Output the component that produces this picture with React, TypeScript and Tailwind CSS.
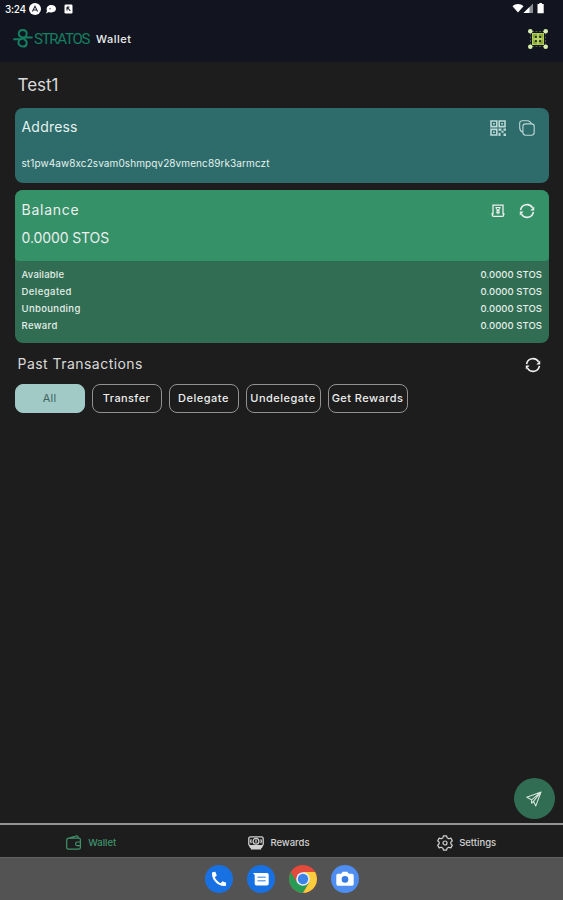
import type { ReactNode } from "react";
import clsx from "clsx";

const balances = [
  { label: "Available", value: "0.0000 STOS", spacing: "tracking-[0.2px]" },
  { label: "Delegated", value: "0.0000 STOS", spacing: "tracking-[0.45px]" },
  { label: "Unbounding", value: "0.0000 STOS", spacing: "tracking-[0.35px]" },
  { label: "Reward", value: "0.0000 STOS", spacing: "tracking-[0.35px]" },
];

const filters = [
  { label: "All", width: "w-[70px]", spacing: "tracking-[0.2px]" },
  { label: "Transfer", width: "w-[70px]", spacing: "tracking-[0.4px]" },
  { label: "Delegate", width: "w-[70px]", spacing: "tracking-[0.5px]" },
  { label: "Undelegate", width: "w-[75px]", spacing: "tracking-[0.5px]" },
  { label: "Get Rewards", width: "w-[80px]", spacing: "tracking-[0.45px]" },
];

const RefreshIcon = ({ className }: { className?: string }) => (
  <svg viewBox="0 0 16 16" className={clsx("w-4 h-4", className)} fill="none" stroke="currentColor" strokeWidth="1.6">
    <path d="M1.6 7.2A6.5 6.5 0 0 1 13.6 4.8M14.4 8.8A6.5 6.5 0 0 1 2.4 11.2" />
    <path d="M15.2 3.6v3.8h-3.9zM.8 12.4V8.6h3.9z" fill="currentColor" stroke="none" />
  </svg>
);

const QrIcon = () => (
  <svg viewBox="0 0 16 16" className="w-4 h-4" fill="none" stroke="currentColor" strokeWidth="1.6">
    <path d="M1 1h5.8v5.6H1zM9.2 1H15v5.6H9.2zM1 9.4h5.8V15H1z" />
    <path
      d="M3 3h1.8v1.6H3zM11.2 3H13v1.6h-1.8zM3 11.4h1.8V13H3zM8.5 8.5h3v2.2h-3zM11.5 10.7h2v2h-2zM13.5 8.5H16v2.2h-2.5zM8.5 12.7h2V16h-2zM13.5 13.5H16V16h-2.5z"
      fill="currentColor"
      stroke="none"
    />
  </svg>
);

const CopyIcon = () => (
  <svg viewBox="0 0 16 16" className="w-4 h-4" fill="none" stroke="currentColor" strokeWidth="1.1">
    <rect x="3.9" y="3.9" width="11.3" height="11.3" rx="2.6" />
    <path d="M3.7 12.3C1.7 11.4.7 10 .7 7.5V3.2A2.5 2.5 0 0 1 3.2.7h5.2c2 0 3.3 1 4 3.2" />
  </svg>
);

const ClaimIcon = () => (
  <svg viewBox="0 0 14 14" className="w-3.5 h-3.5" fill="none" stroke="currentColor" strokeWidth="1.3">
    <path d="M2 10.6V1.2h10v9.4M1.2 9v1.5c0 1.3.6 1.9 1.7 1.9h8.2c1.1 0 1.7-.6 1.7-1.9V9" />
    <path d="M4.5 3.5h5M4.9 4 7 6.6 9.1 4M7 6.5v3.8M5 7h4M5 8.7h4" strokeWidth="1.1" />
  </svg>
);

const SendIcon = () => (
  <svg viewBox="0 0 16 16" className="w-4 h-4" fill="none" stroke="currentColor" strokeWidth="1.1" strokeLinejoin="round">
    <path d="M15 1 .8 6.3l4.8 2.5L15 1 7.5 10.4l2.3 4.5zM5.6 8.8v3.4l1.9-1.8" />
  </svg>
);

const WalletIcon = () => (
  <svg viewBox="0 0 16 15" className="w-4 h-[15px]" fill="none" stroke="currentColor" strokeWidth="1.2">
    <path d="M2.7 3.2h10.1a1.6 1.6 0 0 1 1.6 1.6v7.7a1.6 1.6 0 0 1-1.6 1.6H2.3a1.6 1.6 0 0 1-1.6-1.6V5.2a2 2 0 0 1 2-2ZM3 3.1 10 1c1.3-.3 2.3.3 2.4 2.1M14.4 7h-3a1.8 1.8 0 0 0 0 3.6h3" />
  </svg>
);

const RewardsIcon = () => (
  <svg viewBox="0 0 16 14" className="w-4 h-3.5" fill="none" stroke="currentColor" strokeWidth="1.3">
    <rect x=".8" y=".8" width="14.4" height="9" rx="1.8" />
    <circle cx="8" cy="5.2" r="2.9" />
    <path d="M8 3.6v3.2M3.4 3.3c-.8 1-.8 2.6 0 3.7M12.6 3.3c.8 1 .8 2.6 0 3.7" />
    <path d="M1.2 9.9h13.6M1.8 11.3h12.4M2.8 12.8h10.4" strokeWidth="1.6" />
  </svg>
);

const SettingsIcon = () => (
  <svg viewBox="0 0 16 16" className="w-4 h-4" fill="none" stroke="currentColor" strokeWidth="1.2" strokeLinejoin="round">
    <path d="M6.4.8h3.2l.5 2 1.7 1 2-.7 1.5 2.8L13.8 7.2v1.6l1.5 1.3-1.5 2.8-2-.7-1.7 1-.5 2H6.4l-.5-2-1.7-1-2 .7-1.5-2.8 1.5-1.3V7.2L.7 5.9l1.5-2.8 2 .7 1.7-1z" />
    <circle cx="8" cy="8" r="2" />
  </svg>
);

const ScanIcon = () => (
  <svg viewBox="0 0 22 22" className="w-[22px] h-[22px]">
    <path d="M5 3.5h12M5 18.5h12M3.5 5v12M18.5 5v12" stroke="#4d594a" strokeDasharray="2 1.5" fill="none" />
    <rect x="5.5" y="5.5" width="11" height="11" fill="#8ba83b" stroke="#b3cf55" strokeWidth="1" />
    <path d="M11 6v10M6.5 11h9" stroke="#c5dc71" strokeWidth="1.4" />
    <path d="M8 8h1.8v1.8H8zM12.2 8H14v1.8h-1.8zM8 12.2h1.8V14H8zM12.2 12.2H14V14h-1.8z" fill="#1b2417" />
    <g fill="#d9efaf">
      <circle cx="3.3" cy="3.3" r="2.3" />
      <circle cx="18.7" cy="3.3" r="2.3" />
      <circle cx="3.3" cy="18.7" r="2.3" />
      <circle cx="18.7" cy="18.7" r="2.3" />
    </g>
  </svg>
);

const StatusBar = () => (
  <div className="flex h-[18px] items-center pl-[5px] pr-[18px] text-white">
    <span className="w-[21px] text-[10px] font-medium tracking-[-0.3px]">3:24</span>
    <svg viewBox="0 0 12 12" className="ml-[3px] w-3 h-3">
      <circle cx="6" cy="6" r="6" fill="#fff" />
      <path d="M3.4 8.5 6 3.3l2.6 5.2M4.4 7h3.2" stroke="#222936" strokeWidth="1.1" fill="none" />
    </svg>
    <svg viewBox="0 0 12 10" className="ml-1 w-3 h-2.5">
      <path d="M6.3 1C9 1 11 2.5 11 4.8S9 8.4 6.3 8.4c-1 0-1.7-.1-2.4-.5L1 9.5l1-2.8C.8 3.5 3 1 6.3 1Z" fill="#fff" />
      <circle cx="5" cy="4.8" r=".7" fill="#38404c" />
    </svg>
    <svg viewBox="0 0 9 10" className="ml-[7px] w-[9px] h-2.5">
      <rect x=".5" y=".5" width="8" height="9" rx="1.2" fill="#fff" />
      <path d="M3 3h2.5M3 3v3.5M3.4 3.2 6.3 7" stroke="#222936" strokeWidth="1.1" />
    </svg>
    <svg viewBox="0 0 34 12" className="ml-auto mb-0.5 h-3 w-[34px]" fill="#fff">
      <path d="M1.5 4.2c3-3 8-3 11 0L7 10.5z" />
      <path d="M22 1.5v9.5h-9.5z" fill="#8a8d93" />
      <path d="M18.5 5V11h-6z" />
      <path d="M26.5 2h1.8V1h2.6v1h1.8v9.3h-6.2z" />
    </svg>
  </div>
);

const Header = () => (
  <header className="h-[62px] bg-[#12151f]">
    <StatusBar />
    <div className="flex h-[42px] items-center pl-[13px] pr-[14px]">
      <svg viewBox="0 0 20 20" className="mb-0.5 h-5 w-5 shrink-0" fill="none" stroke="#147f60" strokeWidth="2">
        <path d="M.3 11.2h7.2C10 11.2 13.7 9 13.7 5.8c0-5-7.9-5-7.9 0 0 2 1.6 3.3 3.9 3.6h9.9" />
        <path d="M7 11c-4 5.7 1 7.6 3 7.6 4.7 0 5-6.2.6-7.5" />
      </svg>
      <span className="ml-px w-[61px] font-[Roboto] text-[15px] tracking-[-1.25px] text-[#147f60]">STRATOS</span>
      <span className="ml-px pt-px text-[11px] font-medium tracking-[0.5px]">Wallet</span>
      <div className="ml-auto">
        <ScanIcon />
      </div>
    </div>
  </header>
);

const AddressCard = () => (
  <section className="mt-[9px] h-[75px] rounded-lg bg-[#2d6c6a] px-[7px] text-[#e5f1ef]">
    <div className="flex h-[37px] items-center pr-[7px]">
      <h2 className="flex-1 pt-px text-sm tracking-[0.2px]">Address</h2>
      <div className="flex gap-[13px] pt-[3px] text-[#bcd8d7]">
        <QrIcon />
        <CopyIcon />
      </div>
    </div>
    <p className="mt-[10px] text-[10px] leading-4 tracking-[0.09px]">st1pw4aw8xc2svam0shmpqv28vmenc89rk3armczt</p>
  </section>
);

const BalanceCard = () => (
  <section className="mt-[7px] h-[153px] overflow-hidden rounded-lg bg-[#306d52]">
    <div className="h-[71px] rounded-b bg-[#349168] px-[7px]">
      <div className="flex h-[38px] items-center pr-[7px]">
        <h2 className="flex-1 pt-0.5 text-sm tracking-[0.75px]">Balance</h2>
        <div className="flex items-center gap-3.5 pt-1">
          <ClaimIcon />
          <RefreshIcon />
        </div>
      </div>
      <p className="text-sm leading-5 tracking-[-0.1px]">0.0000 STOS</p>
    </div>
    <div className="pt-[6px] text-[9.5px] font-medium text-[#e5eee9]">
      {balances.map(({ label, value, spacing }) => (
        <div key={label} className="flex h-[17px] items-center justify-between px-[7px]">
          <span className={spacing}>{label}</span>
          <span className="tracking-[0.05px]">{value}</span>
        </div>
      ))}
    </div>
  </section>
);

const NavItem = ({ label, icon, active }: { label: string; icon: ReactNode; active?: boolean }) => (
  <div
    className={clsx(
      "flex flex-1 items-center justify-center gap-[6px] pr-[5px] pt-[3px]",
      active ? "text-[#40946d]" : "text-[#d1d1d1]",
    )}
  >
    {icon}
    <span className="pt-0.5 text-[9.5px] font-medium">{label}</span>
  </div>
);

const Dock = () => (
  <div className="flex h-[43px] items-center justify-center gap-3.5 border-t border-[#626262] bg-[#535353]">
    <svg viewBox="0 0 28 28" className="w-7 h-7">
      <circle cx="14" cy="14" r="14" fill="#1871e3" />
      <path d="m7.2 7.2 3.1-.4 1.5 3.8-2 1.6c1.2 2.7 3.2 4.7 6 6l1.6-2 3.8 1.5-.4 3.2C14 22.6 5.5 14 7.2 7.2Z" fill="#fff" />
    </svg>
    <svg viewBox="0 0 28 28" className="w-7 h-7">
      <circle cx="14" cy="14" r="14" fill="#1871e3" />
      <path d="M6 8h14a1.7 1.7 0 0 1 1.7 1.7v9a1.7 1.7 0 0 1-1.7 1.7H9.4a1.7 1.7 0 0 1-1.7-1.7V10z" fill="#fff" />
      <path d="M10.5 12.2h8.2M10.5 15.8h8.2" stroke="#72a6ec" strokeWidth="1.6" />
    </svg>
    <svg viewBox="0 0 28 28" className="w-7 h-7">
      <circle cx="14" cy="14" r="14" fill="#e34a3b" />
      <path d="M1.9 7A14 14 0 0 0 14 28l6.1-10.5L14 14l-6.1 3.5z" fill="#279b53" />
      <path d="M14 28A14 14 0 0 0 26.1 7H14l6.1 10.5z" fill="#fbcc3b" />
      <circle cx="14" cy="14" r="6.8" fill="#e9eff8" />
      <circle cx="14" cy="14" r="5.2" fill="#3c83e8" />
    </svg>
    <svg viewBox="0 0 28 28" className="w-7 h-7">
      <circle cx="14" cy="14" r="14" fill="#4f8ef0" />
      <path d="M7 8.7h3.2l1.6-2h4.4l1.6 2H21a1.7 1.7 0 0 1 1.7 1.7v8.7a1.7 1.7 0 0 1-1.7 1.7H7a1.7 1.7 0 0 1-1.7-1.7v-8.7A1.7 1.7 0 0 1 7 8.7Z" fill="#fff" />
      <circle cx="14" cy="14.4" r="3.3" fill="#347be3" />
    </svg>
  </div>
);

export default function App() {
  return (
    <div className="relative flex h-screen flex-col bg-[#1d1d1d] font-[Inter,sans-serif] text-[#eeeeee]">
      <Header />
      <main className="flex-1 pl-[14.5px] pr-3.5">
        <h1 className="pl-[3px] pt-[9px] text-[17px] leading-7 text-[#dadada]">Test1</h1>
        <AddressCard />
        <BalanceCard />
        <div className="flex h-[41px] items-center justify-between pl-[3px] pr-2">
          <h2 className="text-sm tracking-[0.46px] text-[#d9d9d9]">Past Transactions</h2>
          <RefreshIcon className="mt-0.5" />
        </div>
        <div className="flex gap-[7px]">
          {filters.map(({ label, width, spacing }, i) => (
            <button
              key={label}
              className={clsx(
                "h-[29px] rounded-lg border whitespace-nowrap text-[11px]",
                width,
                spacing,
                i === 0 ? "border-[#a1cac7] bg-[#a1cac7] text-[#3e6260]" : "border-[#929292] font-medium",
              )}
            >
              {label}
            </button>
          ))}
        </div>
      </main>
      <button className="absolute left-[513.5px] top-[778px] flex h-[41px] w-[41px] items-center justify-center rounded-full bg-[#306d53] text-[#d5e4dc]">
        <SendIcon />
      </button>
      <nav className="flex h-[34px] border-t-2 border-[#939393] bg-[#1d1d1d]">
        <NavItem label="Wallet" icon={<WalletIcon />} active />
        <NavItem label="Rewards" icon={<RewardsIcon />} />
        <NavItem label="Settings" icon={<SettingsIcon />} />
      </nav>
      <Dock />
    </div>
  );
}
